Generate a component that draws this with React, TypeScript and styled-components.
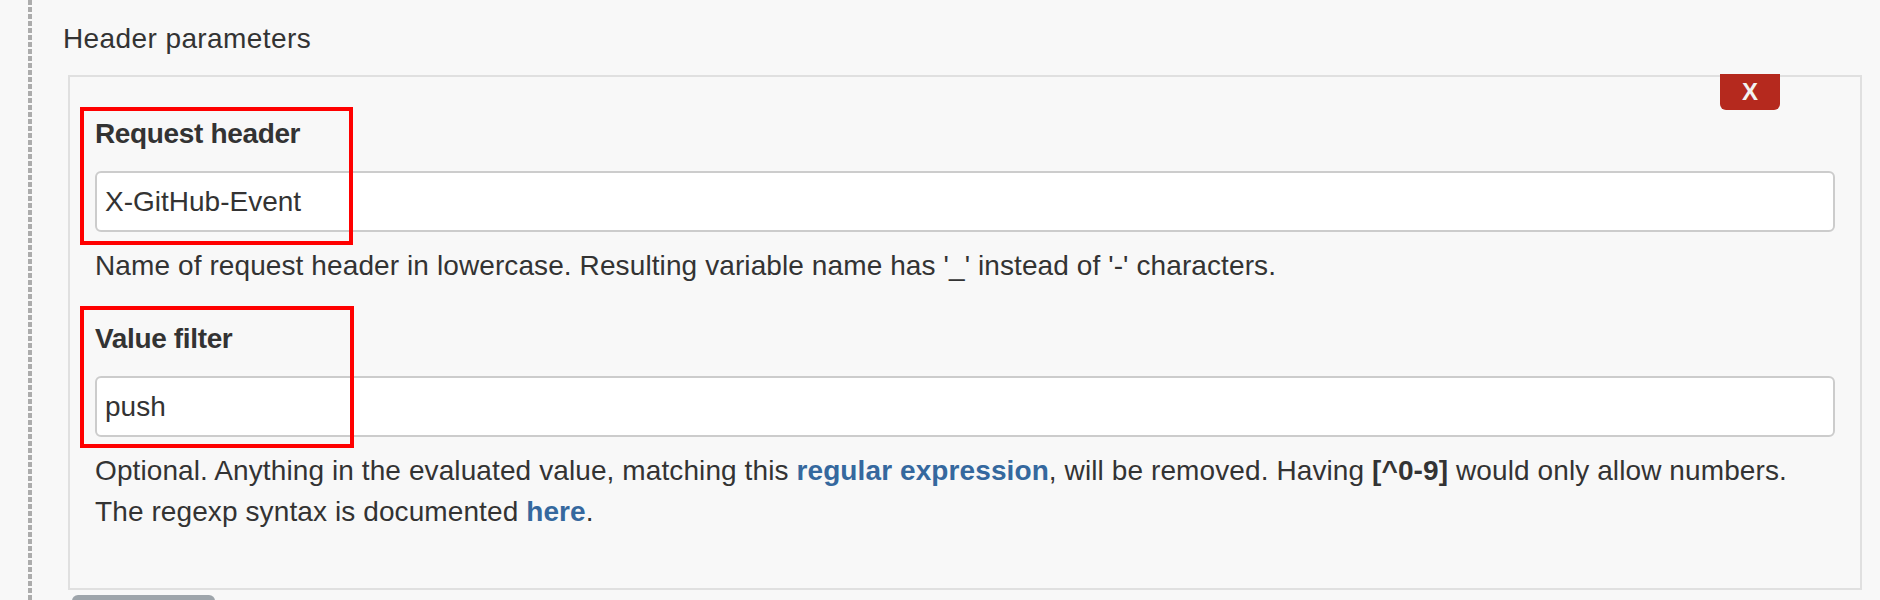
import React from "react";
import styled, { createGlobalStyle } from "styled-components";

const Global = createGlobalStyle`
  html, body {
    margin: 0;
    padding: 0;
    background: #f8f8f8;
    overflow: hidden;
  }
  body {
    font-family: "Liberation Sans", Arial, Helvetica, sans-serif;
    color: #333;
    font-size: 28px;
    line-height: 41px;
  }
`;

const Page = styled.div`
  display: flex;
  height: 600px;
  overflow: hidden;
`;

const DashedRule = styled.div`
  flex: none;
  width: 4px;
  margin-left: 28px;
  align-self: stretch;
  background: repeating-linear-gradient(to bottom, #acacac 0 5px, transparent 5px 7px);
`;

const Main = styled.div`
  flex: 1;
  min-width: 0;
  padding: 18px 18px 0 31px;
`;

const SectionTitle = styled.div`
  font-size: 28px;
  line-height: 41px;
  letter-spacing: 0.4px;
  margin: 0 0 16px 0;
  color: #333;
`;

const RepeatedBlock = styled.div`
  position: relative;
  margin-left: 5px;
  border: 2px solid #e0e0e0;
  padding: 36px 25px 56px 25px;
`;

const RemoveTab = styled.button`
  position: absolute;
  top: -3px;
  right: 80px;
  width: 60px;
  height: 36px;
  border: none;
  border-radius: 0 0 6px 6px;
  background: #b5291e;
  color: #f2f2f2;
  font-family: "Liberation Sans", Arial, sans-serif;
  font-weight: bold;
  font-size: 24px;
  display: flex;
  align-items: center;
  justify-content: center;
  padding: 0;
`;

const Field = styled.div`
  position: relative;
  display: flex;
  flex-direction: column;
  & + & {
    margin-top: 32px;
  }
`;

const Label = styled.div`
  font-weight: bold;
  line-height: 41px;
  letter-spacing: -0.35px;
  margin-bottom: 17px;
`;

const TextInput = styled.input`
  box-sizing: border-box;
  width: 100%;
  height: 61px;
  border: 2px solid #cccccc;
  border-radius: 6px;
  background: #ffffff;
  padding: 0 8px;
  font-family: "Liberation Sans", Arial, sans-serif;
  font-size: 28px;
  color: #333;
  outline: none;
`;

const Help = styled.div`
  margin-top: 13px;
  line-height: 41px;
  letter-spacing: 0.1px;
`;

const Link = styled.a`
  color: #35689e;
  font-weight: bold;
  text-decoration: none;
`;

const Highlight = styled.div<{ $left: number; $top: number; $w: number; $h: number }>`
  position: absolute;
  left: ${(p) => p.$left}px;
  top: ${(p) => p.$top}px;
  width: ${(p) => p.$w}px;
  height: ${(p) => p.$h}px;
  box-sizing: border-box;
  border: 4px solid #ff0000;
  pointer-events: none;
  z-index: 2;
`;

const NextButton = styled.div`
  margin: 5px 0 0 9px;
  width: 143px;
  height: 30px;
  border-radius: 6px;
  background: #9ea5ab;
`;

export default function App() {
  return (
    <>
      <Global />
      <Page>
        <DashedRule />
        <Main>
          <SectionTitle>Header parameters</SectionTitle>
          <RepeatedBlock>
            <RemoveTab type="button">X</RemoveTab>
            <Field>
              <Highlight $left={-15} $top={-6} $w={273} $h={138} />
              <Label>Request header</Label>
              <TextInput readOnly value="X-GitHub-Event" />
              <Help>
                Name of request header in lowercase. Resulting variable name has '_' instead of '-' characters.
              </Help>
            </Field>
            <Field>
              <Highlight $left={-15} $top={-12} $w={274} $h={142} />
              <Label>Value filter</Label>
              <TextInput readOnly value="push" />
              <Help>
                Optional. Anything in the evaluated value, matching this{" "}
                <Link href="#">regular expression</Link>, will be removed. Having <b>[^0-9]</b> would only allow
                numbers.
                <br />
                The regexp syntax is documented <Link href="#">here</Link>.
              </Help>
            </Field>
          </RepeatedBlock>
          <NextButton />
        </Main>
      </Page>
    </>
  );
}
